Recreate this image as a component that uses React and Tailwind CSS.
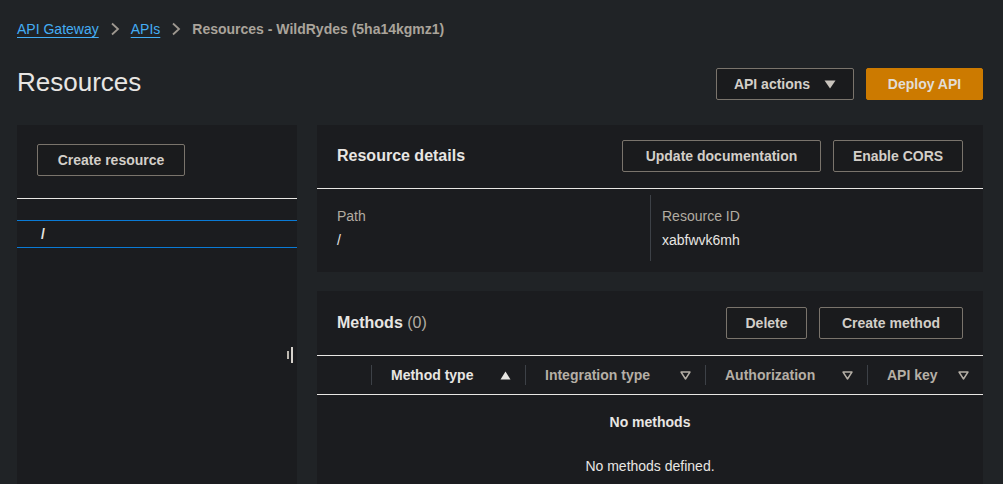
import React from 'react';

const Chevron = () => (
  <svg width="10" height="14" viewBox="0 0 10 14" fill="none" stroke="#9e9890" strokeWidth="1.8" className="mx-[11px]">
    <path d="M2 1.5 L8 7 L2 12.5" />
  </svg>
);

const CaretDown = () => (
  <svg width="12" height="9" viewBox="0 0 12 9" fill="#c9c4bd">
    <path d="M0.5 0.5 H11.5 L6 8.5 Z" />
  </svg>
);

const SortUp = () => (
  <svg width="11" height="9" viewBox="0 0 11 9" fill="#e8e6e3">
    <path d="M0.5 8.5 L5.5 0.5 L10.5 8.5 Z" />
  </svg>
);

const SortNone = () => (
  <svg width="11" height="9" viewBox="0 0 11 9" fill="none" stroke="#b5afa6" strokeWidth="1.4" strokeLinejoin="round">
    <path d="M1 1 H10 L5.5 8 Z" />
  </svg>
);

const Button = ({ children, className = '' }) => (
  <button className={`flex h-[32px] items-center justify-center whitespace-nowrap rounded-[2px] border border-[#7a746c] bg-[#1a1b1d] text-sm font-bold text-[#d3cfc9] ${className}`}>
    {children}
  </button>
);

const columns = [
  { label: 'Method type', width: 'w-[154px]', active: true },
  { label: 'Integration type', width: 'w-[180px]' },
  { label: 'Authorization', width: 'w-[162px]' },
  { label: 'API key', width: 'flex-1' },
];

export default function App() {
  return (
    <div className="h-screen w-screen overflow-hidden bg-[#202326] font-['Liberation_Sans',Arial,sans-serif] text-sm text-[#e8e6e3] flex flex-col">
      {/* Breadcrumb */}
      <div className="flex items-center px-[17px] pt-[20px] leading-[18px]">
        <a className="text-[#44adf4] underline underline-offset-[3px]">API Gateway</a>
        <Chevron />
        <a className="text-[#44adf4] underline underline-offset-[3px]">APIs</a>
        <Chevron />
        <span className="font-bold text-[#aaa49b]">Resources - WildRydes (5ha14kgmz1)</span>
      </div>

      {/* Header */}
      <div className="mt-[30px] flex items-center justify-between pl-[17px] pr-[20px]">
        <h1 className="-mt-[2px] mb-[2px] text-[26px] leading-[32px] text-[#e8e6e3]">Resources</h1>
        <div className="flex gap-[12px]">
          <Button className="w-[138px] gap-[14px]">
            API actions <CaretDown />
          </Button>
          <button className="h-[32px] w-[117px] whitespace-nowrap rounded-[2px] border border-[#cc7a00] bg-[#cc7a00] text-sm font-bold text-[#e2ddd6]">
            Deploy API
          </button>
        </div>
      </div>

      {/* Main */}
      <div className="mt-[25px] flex flex-1 gap-5 pl-[17px] pr-[20px]">
        {/* Resource tree */}
        <div className="relative flex w-[280px] shrink-0 flex-col bg-[#1b1c1f] pt-[19px]">
          <Button className="ml-[20px] w-[148px]">Create resource</Button>
          <div className="mt-[22px] h-[22px] border-t border-[#e8e6e3]" />
          <div className="flex h-[28px] items-center border-t border-b border-t-[#0a7ad5] border-b-[#0a7ad5] pl-[24px] font-bold">/</div>
          <div className="absolute right-[4px] top-[222px] flex items-center gap-[2px]">
            <div className="h-[8px] w-[2px] bg-[#bdb8b0]" />
            <div className="h-[16px] w-[2px] bg-[#d6d2cc]" />
          </div>
        </div>

        {/* Right side */}
        <div className="flex flex-1 flex-col gap-[19px]">
          {/* Resource details */}
          <div className="bg-[#1b1c1f]">
            <div className="flex items-center justify-between border-b border-[#e8e6e3] px-[20px] pt-[15px] pb-[16px]">
              <h2 className="text-base font-bold">Resource details</h2>
              <div className="flex gap-[12px]">
                <Button className="w-[199px]">Update documentation</Button>
                <Button className="w-[130px]">Enable CORS</Button>
              </div>
            </div>
            <div className="grid grid-cols-2 px-[20px] pt-[6px] pb-[11px] leading-[20px]">
              <div className="py-[11px]">
                <div className="text-[#b2aca2]">Path</div>
                <div className="mt-[4px]">/</div>
              </div>
              <div className="border-l border-[#3d4147] py-[11px] pl-[11px]">
                <div className="text-[#b2aca2]">Resource ID</div>
                <div className="mt-[4px]">xabfwvk6mh</div>
              </div>
            </div>
          </div>

          {/* Methods */}
          <div className="flex-1 bg-[#1b1c1f]">
            <div className="flex items-center justify-between border-b border-[#e8e6e3] px-[20px] pt-[16px] pb-[16px]">
              <h2 className="text-base">
                <span className="font-bold">Methods</span> <span className="text-[#b2aca2]">(0)</span>
              </h2>
              <div className="flex gap-[12px]">
                <Button className="w-[81px]">Delete</Button>
                <Button className="w-[144px]">Create method</Button>
              </div>
            </div>
            <div className="flex h-[39px] items-center border-b border-[#e8e6e3]">
              <div className="w-[54px] shrink-0" />
              {columns.map((c) => (
                <div key={c.label} className={`${c.width} flex h-[20px] items-center justify-between border-l border-[#3d4147] pl-[19px] pr-[14px] font-bold ${c.active ? 'text-[#e8e6e3]' : 'text-[#b5afa6]'}`}>
                  <span>{c.label}</span>
                  {c.active ? <SortUp /> : <SortNone />}
                </div>
              ))}
            </div>
            <div className="flex flex-col items-center pt-[17px] leading-[20px]">
              <div className="font-bold">No methods</div>
              <div className="mt-[24px]">No methods defined.</div>
            </div>
          </div>
        </div>
      </div>
    </div>
  );
}
